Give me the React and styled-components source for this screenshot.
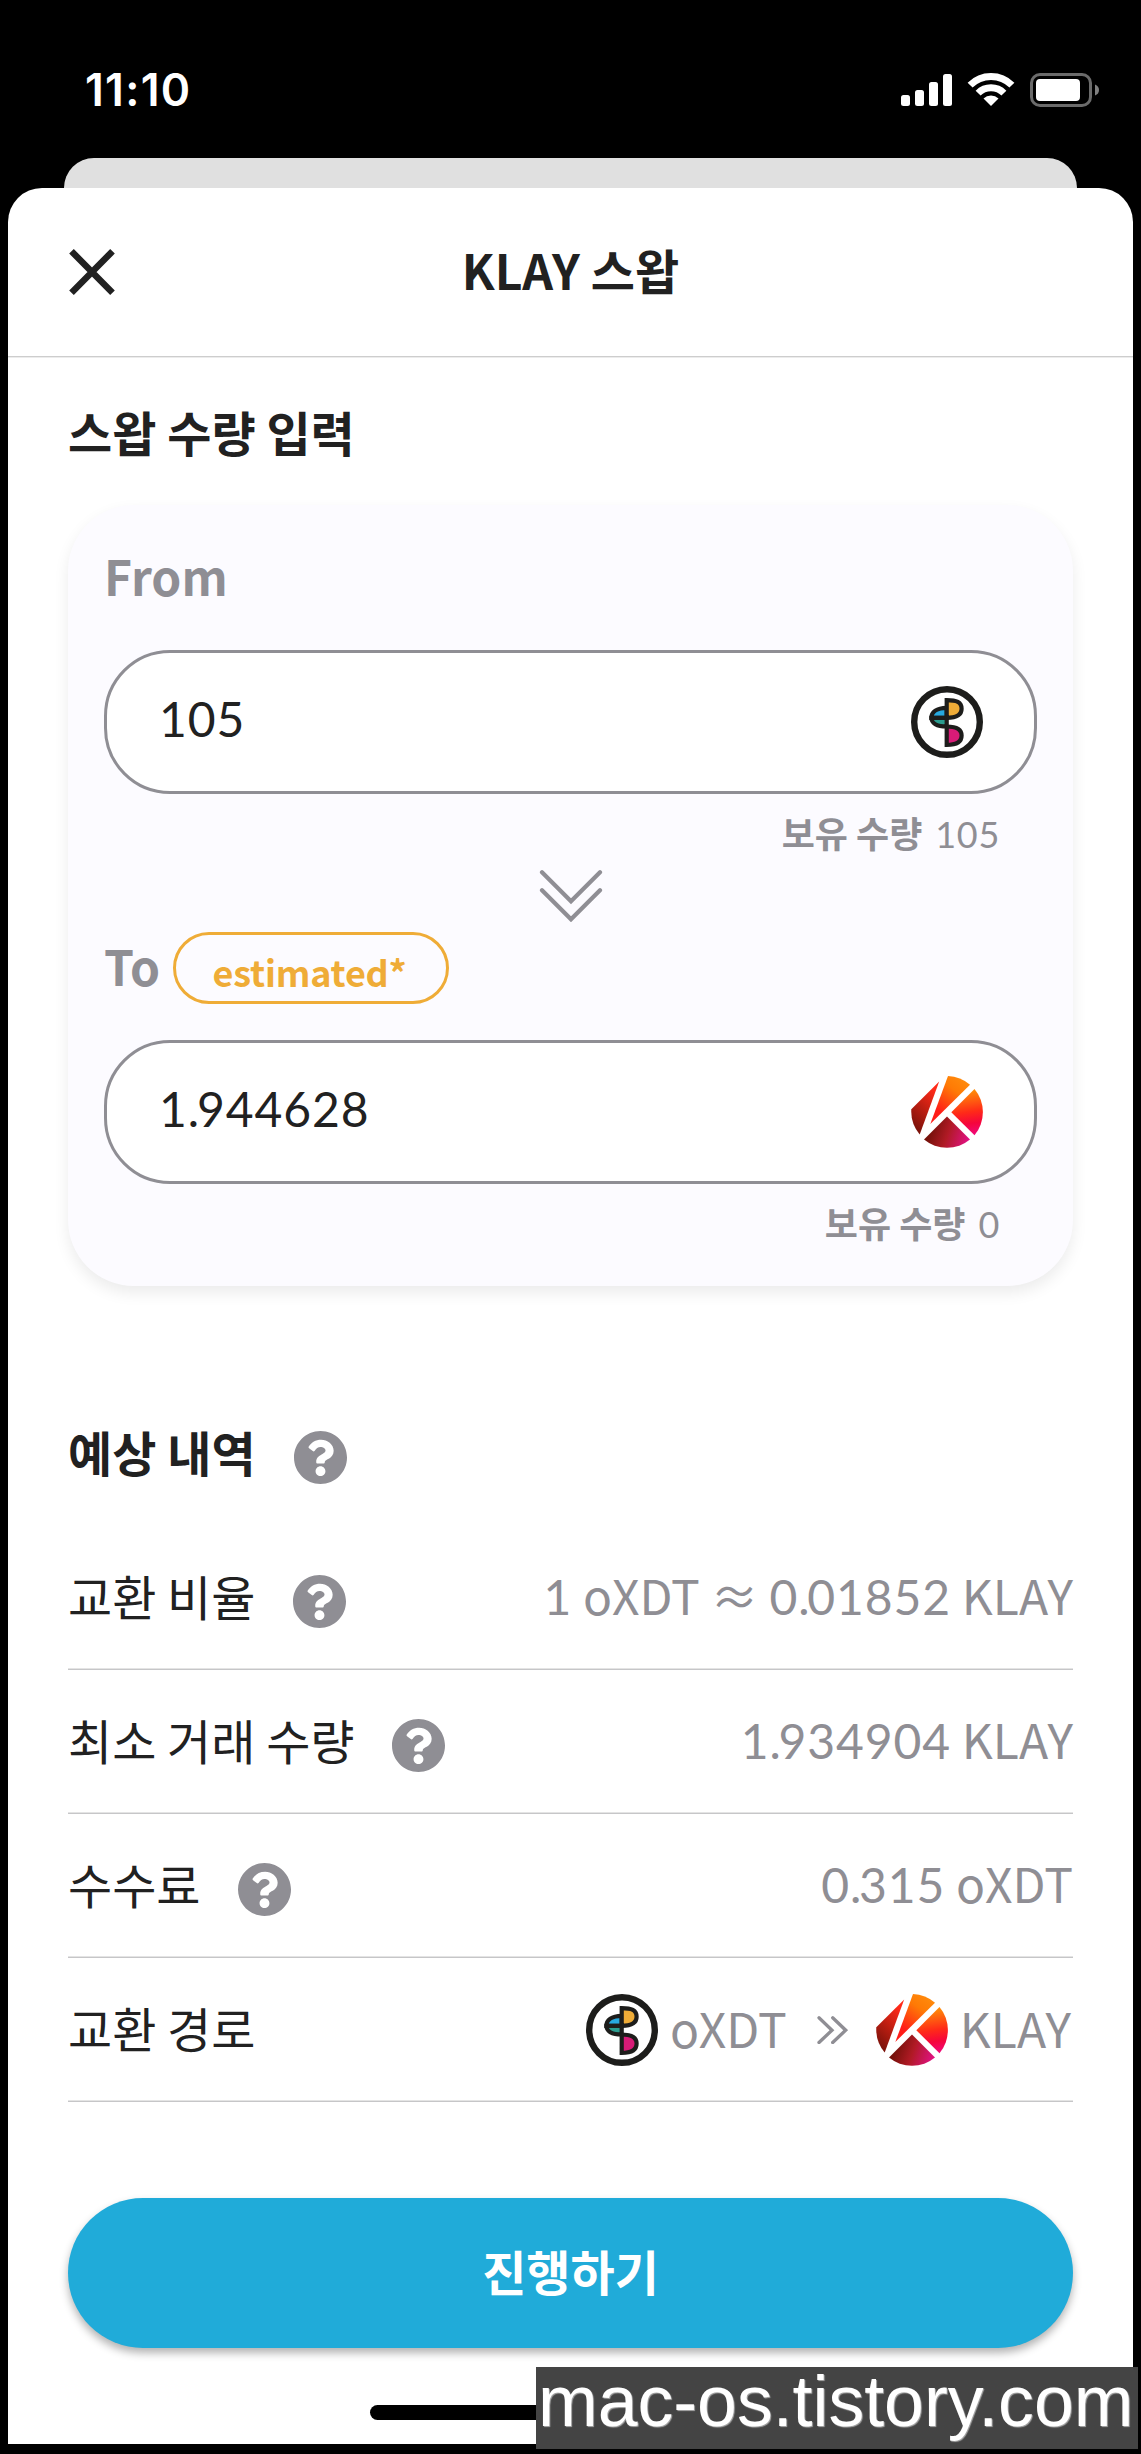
import styled, { createGlobalStyle } from 'styled-components';

const GlobalStyle = createGlobalStyle`
  * {
    box-sizing: border-box;
  }

  body {
    margin: 0;
    background: #000;
    font-family: 'Noto Sans CJK KR', sans-serif;
    font-size: 48px;
    color: #212121;
  }
`;

const Screen = styled.div`
  position: relative;
  display: flex;
  flex-direction: column;
  width: 1141px;
  height: 2454px;
  padding: 0 8px 10px;
  background: #000;
  overflow: hidden;
`;

const StatusBar = styled.div`
  display: flex;
  align-items: center;
  justify-content: space-between;
  height: 158px;
  padding: 22px 33px 0 77px;
`;

const Clock = styled.div`
  color: #fff;
  font-family: Inter, sans-serif;
  font-size: 44.5px;
  font-weight: 600;
  line-height: 48px;
  letter-spacing: 1.3px;
`;

const BackCard = styled.div`
  flex: none;
  height: 30px;
  margin: 0 56px;
  border-radius: 32px 32px 0 0;
  background: #e0e0e0;
`;

const Sheet = styled.div`
  flex: 1;
  display: flex;
  flex-direction: column;
  border-radius: 34px 34px 0 0;
  background: #fff;
`;

const Header = styled.header`
  display: grid;
  grid-template-columns: 46px 1fr 46px;
  align-items: center;
  height: 169px;
  padding: 0 61px;
  border-bottom: 1px solid #cdcdcd;
  box-shadow: 0 1px 0 #ececec;
`;

const Title = styled.h1`
  margin: 0;
  padding-bottom: 6px;
  font-size: 48px;
  font-weight: 700;
  line-height: 70px;
  text-align: center;
`;

const Content = styled.main`
  display: flex;
  flex-direction: column;
  padding: 0 60px;
`;

const SectionTitle = styled.h2`
  display: flex;
  align-items: center;
  gap: 38px;
  height: 70px;
  margin: ${({ $top }) => $top}px 0 0;
  font-size: 48px;
  font-weight: 700;
  line-height: 70px;
`;

const SwapCard = styled.section`
  display: flex;
  flex-direction: column;
  height: 781px;
  margin-top: 39px;
  padding: 37px 36px 0 36px;
  border-radius: 66px;
  background: #fcfbff;
  box-shadow: 0 7px 15px rgba(0, 0, 0, 0.08);
`;

const FieldLabel = styled.div`
  display: flex;
  align-items: center;
  height: 72px;
  color: #8f8e94;
  font-weight: 700;
`;

const LabelText = styled.span`
  padding-bottom: 5px;
  line-height: 67px;
`;

const Pill = styled.span`
  display: flex;
  align-items: center;
  justify-content: center;
  width: 276px;
  height: 72px;
  margin-left: 13px;
  padding: 5px 3px 0 0;
  border: 3px solid #efac37;
  border-radius: 36px;
  color: #efac37;
  font-size: 36px;
  line-height: 52px;
  letter-spacing: -0.2px;
`;

const AmountBox = styled.div`
  display: flex;
  align-items: center;
  justify-content: space-between;
  height: 144px;
  margin-top: 36px;
  padding: 0 51px 0 52px;
  border: 3px solid #8f8e94;
  border-radius: 66px;
  background: #fff;
`;

const Amount = styled.span`
  margin-top: -9px;
  line-height: 60px;
`;

const Balance = styled.div`
  display: flex;
  justify-content: flex-end;
  align-items: baseline;
  gap: 13px;
  height: 52px;
  margin-top: 12px;
  padding-right: 37px;
  color: #8f8e94;
  font-size: 36px;
  font-weight: 700;
  line-height: 52px;
`;

const Digits = styled.span`
  font-family: Lato, sans-serif;
  font-weight: 400;
  letter-spacing: 0.019em;
`;

const Point = styled.span`
  letter-spacing: -0.045em;
`;

const Arrow = styled.div`
  display: flex;
  justify-content: center;
  height: 52px;
  margin: 12px 0 10px;
`;

const Details = styled.div`
  margin-top: 40px;
`;

const Row = styled.div`
  display: flex;
  align-items: center;
  justify-content: space-between;
  height: 144px;
  padding-bottom: 6px;
  box-shadow: inset 0 -1px 0 #c6c6c8, inset 0 -2px 0 #e4e4e4;
  line-height: 70px;
`;

const RowLabel = styled.div`
  display: flex;
  align-items: center;
  gap: 38px;
`;

const HelpIcon = styled.svg`
  display: block;
  position: relative;
  top: 6px;
`;

const RowValue = styled.div`
  display: flex;
  align-items: center;
  color: #8f8e94;
  white-space: pre;
`;

const RouteToken = styled.span`
  display: flex;
  align-items: center;
  gap: 12px;

  svg {
    margin-top: 6px;
  }
`;

const Route = styled(RowValue)`
  padding-right: 2px;
`;

const RouteArrow = styled.svg`
  margin: 5px 28px 0 30px;
`;

const SubmitButton = styled.button`
  height: 150px;
  margin-top: 96px;
  padding: 0 0 6px;
  border: 0;
  border-radius: 75px;
  background: #20abd9;
  box-shadow: 0 5px 9px rgba(0, 0, 0, 0.3);
  color: #fff;
  font: 700 48px/70px 'Noto Sans CJK KR', sans-serif;
`;

const HomeIndicator = styled.div`
  align-self: center;
  width: 402px;
  height: 15px;
  margin-top: 57px;
  border-radius: 8px;
  background: #000;
`;

const Watermark = styled.div`
  position: absolute;
  right: 3px;
  bottom: 5px;
  width: 602px;
  height: 82px;
  padding-left: 2px;
  background: #444;
  color: #fff;
  font-family: 'Liberation Sans', Arial, sans-serif;
  font-size: 71.6px;
  line-height: 68px;
  text-shadow: 1px 1px 1px #aaa;
  white-space: nowrap;
`;

const StatusIcons = () => (
  <svg width="200" height="36" viewBox="900 72 200 36" fill="#fff">
    <rect x="901" y="95" width="9" height="11" rx="2.5" />
    <rect x="915" y="90" width="9" height="16" rx="2.5" />
    <rect x="929" y="82" width="9" height="24" rx="2.5" />
    <rect x="943" y="74" width="9" height="32" rx="2.5" />
    <g fill="none" stroke="#fff" strokeWidth="7">
      <path d="M970.1 85.1A29.5 29.5 0 0 1 1011.900 85.100" />
      <path d="M978.1 93.1A18.200 18.200 0 0 1 1003.900 93.100" />
    </g>
    <path d="M983.500 98.500A10.700 10.700 0 0 1 998.500 98.500L991 106Z" />
    <rect x="1031.500" y="74.500" width="59" height="31" rx="8.500" fill="none" stroke="#6b6b6b" strokeWidth="3" />
    <rect x="1036" y="79" width="44" height="22" rx="4" />
    <path d="M1095 84.500Q1099 86 1099 90Q1099 94 1095 95.500Z" fill="#808080" />
  </svg>
);

const CloseIcon = () => (
  <svg width="46" height="46" viewBox="0 0 46 46" stroke="#212121" strokeWidth="6.500">
    <path d="M2.500 2.300L43.500 43.700M43.500 2.300L2.500 43.700" />
  </svg>
);

const Help = () => (
  <HelpIcon width="53" height="53" viewBox="8 8 496 496" fill="#8f8e94">
    <path d="M504 256c0 136.997-111.043 248-248 248S8 392.997 8 256C8 119.083 119.043 8 256 8s248 111.083 248 248zM262.655 90c-54.497 0-89.255 22.957-116.549 63.758-3.536 5.286-2.353 12.415 2.715 16.258l34.699 26.310c5.205 3.947 12.621 3.008 16.665-2.122 17.864-22.658 30.113-35.797 57.303-35.797 20.429 0 45.698 13.148 45.698 32.958 0 14.976-12.363 22.667-32.534 33.976C247.128 238.528 216 254.941 216 296v4c0 6.627 5.373 12 12 12h56c6.627 0 12-5.373 12-12v-1.333c0-28.462 83.186-29.647 83.186-106.667 0-58.002-60.165-102-116.531-102zM256 338c-25.365 0-46 20.635-46 46 0 25.364 20.635 46 46 46s46-20.636 46-46c0-25.365-20.635-46-46-46z" />
  </HelpIcon>
);

const OxdtIcon = () => (
  <svg width="72" height="72" viewBox="0 0 72 72">
    <circle cx="36" cy="36" r="32.800" fill="#fff" stroke="#1d1d1b" strokeWidth="6.400" />
    <g stroke="#1d1d1b" strokeWidth="4.200">
      <path d="M35.700 21.800C25.500 22 20.400 26 20.400 31.800H35.700Z" fill="#27a9e0" />
      <path d="M35.700 40.500C25.500 40.500 20.400 37 20.400 31.800H35.700Z" fill="#2a9d8f" />
      <path d="M35.700 14.100C45.500 14.100 50.600 16 50.600 22.800C50.600 29 45.500 31.800 35.700 31.800Z" fill="#efac37" />
      <path d="M35.700 40.500C45.500 40.500 50.600 43.500 50.600 49.500C50.600 56 45.500 58.900 35.700 58.900Z" fill="#d81b77" />
    </g>
  </svg>
);

const KlayIcon = ({ id }) => (
  <svg width="72" height="72" viewBox="0 0 72 72">
    <defs>
      <linearGradient id={`${id}-left`} x1="0.700" y1="0.100" x2="0.250" y2="1">
        <stop offset="0" stopColor="#ff2a18" />
        <stop offset="1" stopColor="#75110a" />
      </linearGradient>
      <linearGradient id={`${id}-top`} x1="0.800" y1="0" x2="0.200" y2="1">
        <stop offset="0" stopColor="#ff8c0c" />
        <stop offset="0.300" stopColor="#ff7a05" />
        <stop offset="0.800" stopColor="#ff1c18" />
      </linearGradient>
      <linearGradient id={`${id}-right`} x1="0.500" y1="0" x2="0.600" y2="1">
        <stop offset="0.050" stopColor="#ff8c08" />
        <stop offset="0.500" stopColor="#ff2a18" />
        <stop offset="0.750" stopColor="#f5053c" />
        <stop offset="1" stopColor="#f0087a" />
      </linearGradient>
      <linearGradient id={`${id}-bottom`} x1="0.100" y1="0.600" x2="0.950" y2="0.800">
        <stop offset="0" stopColor="#75110a" />
        <stop offset="0.450" stopColor="#b01a25" />
        <stop offset="1" stopColor="#df1280" />
      </linearGradient>
    </defs>
    <path d="M28.200 5.500L0.300 33.300A36 36 0 0 0 8.700 58.500Z" fill={`url(#${id}-left)`} />
    <path d="M37 0A36 36 0 0 1 59 8.700L19.300 48Z" fill={`url(#${id}-top)`} />
    <path d="M63.500 13A36 36 0 0 1 63.500 59.200L40.300 36.200Z" fill={`url(#${id}-right)`} />
    <path d="M36 40.500L59 63.500A36 36 0 0 1 13 63.500Z" fill={`url(#${id}-bottom)`} />
  </svg>
);

const DoubleDown = () => (
  <svg width="64" height="52" viewBox="0 0 64 52" fill="none" stroke="#8f8e94" strokeWidth="4.200" strokeLinecap="round">
    <path d="M3 2.300L32 31.300L61 2.300M3 20.300L32 49.300L61 20.300" />
  </svg>
);

const DoubleRight = () => (
  <RouteArrow width="31" height="28" viewBox="0 0 31 28" fill="none" stroke="#8f8e94" strokeWidth="3.300" strokeLinecap="round">
    <path d="M2 1.800L15 14.200L2 26.500M15.700 1.800L28.700 14.200L15.700 26.500" />
  </RouteArrow>
);

// Numbers use Lato, with the decimal point set a little tighter
const Num = ({ value }) => {
  const [whole, fraction] = value.split('.');

  return (
    <Digits>
      {whole}
      {fraction && <Point>.</Point>}
      {fraction}
    </Digits>
  );
};

const App = () => (
  <>
    <GlobalStyle />
    <Screen>
      <StatusBar>
        <Clock>11:10</Clock>
        <StatusIcons />
      </StatusBar>
      <BackCard />
      <Sheet>
        <Header>
          <CloseIcon />
          <Title>KLAY 스왑</Title>
        </Header>
        <Content>
          <SectionTitle $top={39}>스왑 수량 입력</SectionTitle>
          <SwapCard>
            <FieldLabel>
              <LabelText>From</LabelText>
            </FieldLabel>
            <AmountBox>
              <Amount><Num value="105" /></Amount>
              <OxdtIcon />
            </AmountBox>
            <Balance>
              보유 수량
              <Num value="105" />
            </Balance>
            <Arrow>
              <DoubleDown />
            </Arrow>
            <FieldLabel>
              <LabelText>To</LabelText>
              <Pill>estimated*</Pill>
            </FieldLabel>
            <AmountBox>
              <Amount><Num value="1.944628" /></Amount>
              <KlayIcon id="to" />
            </AmountBox>
            <Balance>
              보유 수량
              <Num value="0" />
            </Balance>
          </SwapCard>

          <SectionTitle $top={130}>
            예상 내역
            <Help />
          </SectionTitle>
          <Details>
            <Row>
              <RowLabel>
                교환 비율
                <Help />
              </RowLabel>
              <RowValue>
                <span><Num value="1" /> oXDT ≈ <Num value="0.01852" /> KLAY</span>
              </RowValue>
            </Row>
            <Row>
              <RowLabel>
                최소 거래 수량
                <Help />
              </RowLabel>
              <RowValue>
                <span><Num value="1.934904" /> KLAY</span>
              </RowValue>
            </Row>
            <Row>
              <RowLabel>
                수수료
                <Help />
              </RowLabel>
              <RowValue>
                <span><Num value="0.315" /> oXDT</span>
              </RowValue>
            </Row>
            <Row>
              <RowLabel>교환 경로</RowLabel>
              <Route>
                <RouteToken>
                  <OxdtIcon />
                  oXDT
                </RouteToken>
                <DoubleRight />
                <RouteToken>
                  <KlayIcon id="route" />
                  KLAY
                </RouteToken>
              </Route>
            </Row>
          </Details>
          <SubmitButton>진행하기</SubmitButton>
          <HomeIndicator />
        </Content>
      </Sheet>
      <Watermark>mac-os.tistory.com</Watermark>
    </Screen>
  </>
);

export default App;
